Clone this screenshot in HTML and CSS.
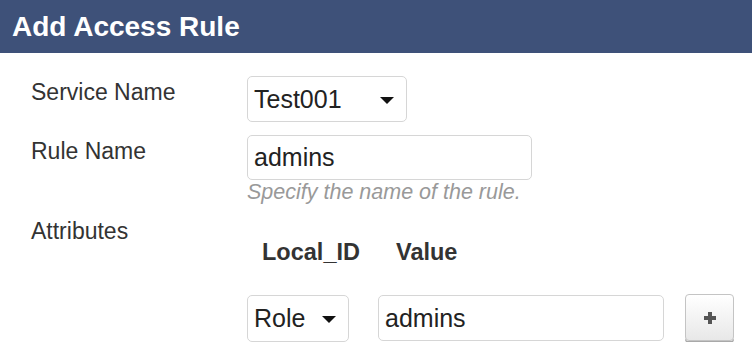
FILE: index.html
```html
<!DOCTYPE html>
<html lang="en">
<head>
    <meta charset="UTF-8">
    <meta name="viewport" content="width=device-width, initial-scale=1.0">
    <title>Add Access Rule</title>
    <link rel="stylesheet" href="styles.css">
</head>

<body>

<header class="panel-heading">
    <h1>Add Access Rule</h1>
</header>

<section class="rule-form">
    <div class="form-row row-service">
        <label class="form-label">Service Name</label>
        <div class="form-control-wrap">
            <div class="fake-select select-service">
                <span>Test001</span>
                <svg class="caret" width="14" height="7" viewBox="0 0 14 7"><polygon points="0,0 14,0 7,7" fill="#111"/></svg>
            </div>
        </div>
    </div>

    <div class="form-row row-rule">
        <label class="form-label">Rule Name</label>
        <div class="form-control-wrap">
            <input class="text-input input-rule" type="text" value="admins">
            <div class="help-text">Specify the name of the rule.</div>
        </div>
    </div>

    <div class="form-row row-attributes">
        <label class="form-label">Attributes</label>
        <div class="attr-table">
            <div class="attr-head head-id">Local_ID</div>
            <div class="attr-head head-value">Value</div>
            <div></div>

            <div class="fake-select select-role">
                <span>Role</span>
                <svg class="caret" width="14" height="7" viewBox="0 0 14 7"><polygon points="0,0 14,0 7,7" fill="#111"/></svg>
            </div>
            <input class="text-input input-value" type="text" value="admins">
            <button class="add-button" type="button">
                <svg width="12" height="12" viewBox="0 0 12 12"><rect x="4" y="0" width="4" height="12" fill="#555"/><rect x="0" y="4" width="12" height="4" fill="#555"/></svg>
            </button>
        </div>
    </div>
</section>

</body>
</html>
```

FILE: styles.css
```css
/* General Styles */
body {
    font-family: "Liberation Sans", Arial, sans-serif;
    margin: 0;
    padding: 0;
    background-color: #fff;
    color: #333;
}

.panel-heading {
    background-color: #3e5179;
    color: white;
    height: 53px;
    padding-left: 12px;
}

.panel-heading h1 {
    margin: 0;
    font-size: 28px;
    line-height: 53px;
    font-weight: bold;
}

.rule-form {
    padding: 23px 0 0 31px;
}

.form-row {
    display: grid;
    grid-template-columns: 216px 1fr;
    align-items: start;
}

.row-service {
    margin-bottom: 13px;
}

.row-rule {
    margin-bottom: 13px;
}

.form-label {
    font-size: 23px;
    line-height: 32px;
    color: #333;
}

.fake-select {
    box-sizing: border-box;
    display: flex;
    align-items: center;
    justify-content: space-between;
    height: 46px;
    padding: 0 12px 0 6px;
    border: 1px solid #d6d6d6;
    border-radius: 5px;
    font-size: 25px;
    color: #222;
    background-color: #fff;
}

.select-service {
    width: 160px;
}

.caret {
    margin-top: 2px;
}

.text-input {
    box-sizing: border-box;
    height: 45px;
    padding: 0 6px;
    border: 1px solid #d6d6d6;
    border-radius: 5px;
    font-family: "Liberation Sans", Arial, sans-serif;
    font-size: 25px;
    color: #222;
    background-color: #fff;
    outline: none;
}

.input-rule {
    display: block;
    width: 285px;
}

.help-text {
    margin-top: 2px;
    font-size: 21.5px;
    line-height: 20px;
    font-style: italic;
    color: #999;
}

.attr-table {
    display: grid;
    grid-template-columns: 131px 307px 49px;
    margin-top: 21px;
    align-items: start;
}

.attr-head {
    font-size: 23.5px;
    line-height: 33px;
    font-weight: bold;
    color: #333;
    margin-bottom: 26px;
}

.head-id {
    padding-left: 15px;
}

.head-value {
    padding-left: 18px;
}

.select-role {
    width: 102px;
    height: 47px;
}

.input-value {
    width: 286px;
    height: 46px;
}

.add-button {
    box-sizing: border-box;
    width: 49px;
    height: 47px;
    margin-top: -1px;
    display: flex;
    align-items: center;
    justify-content: center;
    border: 1px solid #c4c4c4;
    border-radius: 4px;
    background: linear-gradient(#ffffff, #e8e8e8);
    box-shadow: 0 2px 0 #a9a9a9;
    cursor: pointer;
    padding: 0;
}
```
